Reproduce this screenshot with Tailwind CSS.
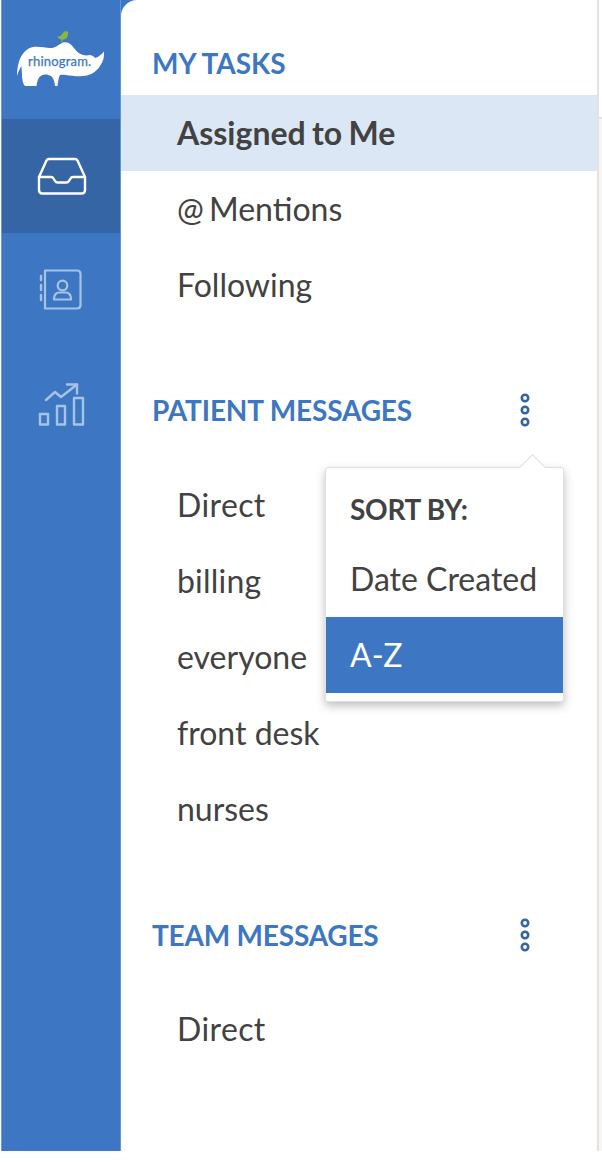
<!DOCTYPE html>
<html>
<head>
<script src="https://cdn.jsdelivr.net/npm/@tailwindcss/browser@4"></script>
</head>
<body class="bg-white">
<div class="relative h-[1164px] w-[602px] overflow-hidden bg-white font-['Lato','Carlito','Open_Sans',sans-serif]">
  <div class="flex h-[1151px] w-[602px] pl-[1px]">
    <nav class="flex h-full w-[120px] shrink-0 flex-col border-l border-l-[#6c9bd8] border-r border-r-[#5f97da] bg-[#3d77c3]">
      <div class="h-[119px] shrink-0">
        <svg class="ml-[-2px] block" width="120" height="119" viewBox="0 0 120 119">
          <path d="M62 42.500 62 39" stroke="#8bb640" stroke-width="1.200" fill="none"/>
          <path d="M57 36.500c1.500-.2 2.500.3 3.500-.5 1.200-1 2.200-3.500 4-4.500 1.300-.6 2.800-.3 3.500.5.300 2-.2 4.500-1.500 6-1.300 1.400-3.500 2-5.500 1.500-1.500-.4-2.800-1.500-4-3z" fill="#8bb640"/>
          <path d="M17 73C17.500 67 19 59 22 55c2.500-4 6-7 11-8 5-1 12 .5 17 1 5 .3 8-3 13-5.500 3-1 6 0 9 3 3 4 6 8 11 9.500 2 .6 5 .6 7 0 2.500.6 3.500 1 5 3 3-.6 6-3 9-6.500.4 5-.6 10-4 14.500-3 4.500-7 8-13 9.500-7 1.500-15 .5-21-.500-3-.5-4.500-.5-6 0-1.500 2.500-2 7-2.500 11H55c-.3-4-1.500-8-4-10-3-2-7-2.200-10-.300-3 2-4 6-4.500 10.300H25c-2-2-3-6-3-11-.2-3-.3-6-.6-9-2 3-3.500 7-4.400 10z" fill="#fff"/>
          <text x="28" y="66" fill="#3d77c3" font-size="13" font-weight="400" stroke="#3d77c3" stroke-width=".25" font-family="Lato, sans-serif" letter-spacing=".2">rhinogram.</text>
        </svg>
      </div>
      <a class="flex h-[114px] shrink-0 items-center justify-center bg-[#3565a5]">
        <svg class="ml-[1px]" width="50" height="40" viewBox="0 0 50 40" fill="none" stroke="#fff" stroke-width="2.400" stroke-linecap="round" stroke-linejoin="round">
          <path d="M2 21 9.500 4.500C10 3.400 11 3 12 3h26c1 0 2 .4 2.500 1.500L48 21"/>
          <path d="M2 21h12c1.300 0 2 .6 2.500 1.500l1.500 2.500c.7 1 1.500 1.500 2.500 1.500h9c1 0 1.800-.5 2.500-1.500l1.500-2.500c.5-.9 1.200-1.500 2.500-1.500h12v13c0 2-1.500 3.500-3.500 3.500h-39C3.500 37.500 2 36 2 34z"/>
        </svg>
      </a>
      <a class="flex h-[114px] shrink-0 items-center justify-center">
        <svg width="44" height="42" viewBox="0 0 44 42" fill="none" stroke="#a6c3e6" stroke-width="2.200" stroke-linecap="round" stroke-linejoin="round">
          <path d="M6 1.500h32c2 0 3.500 1.500 3.500 3.500v31c0 2-1.500 3.500-3.500 3.500H6z"/>
          <path d="M2 7v4M2 16v5M2 26v5" stroke-width="2.400"/>
          <circle cx="23.500" cy="16.500" r="4.800"/>
          <path d="M15 30.500v-1.500c0-3 2.500-5.500 5-5.500h7c2.500 0 5 2.500 5 5.500v1.500z"/>
        </svg>
      </a>
      <a class="flex h-[104px] shrink-0 items-start justify-center pt-[36px]">
        <svg width="48" height="44" viewBox="0 0 48 44" fill="none" stroke="#a6c3e6" stroke-width="2.400" stroke-linecap="round" stroke-linejoin="round">
          <path d="M9 17 18 9l6 5 16-12.500"/>
          <path d="M30 1.500h10v9"/>
          <rect x="3" y="31" width="8" height="10.500"/>
          <rect x="20" y="23" width="8" height="18.500"/>
          <rect x="37" y="15" width="9" height="26.500"/>
        </svg>
      </a>
    </nav>
    <div class="h-full w-[478px] shrink-0 bg-[#3d77c3]">
    <main class="relative z-10 flex h-full w-[478px] flex-col rounded-tl-[16px] border-r-2 border-r-[#e3e3e3] bg-white text-[32px] text-[#424242]">
      <h2 class="ml-[31px] mt-[46px] h-[34px] text-[28px] font-bold uppercase leading-[34px] tracking-[0px] text-[#3d77c3]">My Tasks</h2>
      <a class="mt-[15px] block h-[76px] bg-[#dce7f5] pl-[56px] font-bold leading-[76px] [word-spacing:-1.500px]">Assigned to Me</a>
      <a class="block h-[76px] pl-[56px] leading-[76px] [word-spacing:-3px]">@ Mentions</a>
      <a class="block h-[76px] pl-[56px] leading-[76px]">Following</a>

      <div class="relative mt-[70px] flex h-[34px] items-center justify-between pl-[31px] pr-[66px]">
        <h2 class="text-[28px] font-bold uppercase leading-[34px] tracking-[-0.15px] text-[#3d77c3]">Patient Messages</h2>
        <svg width="12" height="34" viewBox="0 0 12 34" fill="none" stroke="#35659f" stroke-width="2.600"><circle cx="6" cy="5" r="3.200"/><circle cx="6" cy="17" r="3.200"/><circle cx="6" cy="29" r="3.200"/></svg>
      </div>
      <a class="mt-[40px] block h-[76px] pl-[56px] leading-[76px] tracking-[0.4px]">Direct</a>
      <a class="block h-[76px] pl-[56px] leading-[76px] tracking-[0.2px]">billing</a>
      <a class="block h-[76px] pl-[56px] leading-[76px]">everyone</a>
      <a class="block h-[76px] pl-[56px] leading-[76px]">front desk</a>
      <a class="block h-[76px] pl-[56px] leading-[76px]">nurses</a>

      <div class="relative mt-[71px] flex h-[34px] items-center justify-between pl-[31px] pr-[66px]">
        <h2 class="text-[28px] font-bold uppercase leading-[34px] tracking-[-0.2px] text-[#3d77c3]">Team Messages</h2>
        <svg width="12" height="34" viewBox="0 0 12 34" fill="none" stroke="#35659f" stroke-width="2.600"><circle cx="6" cy="5" r="3.200"/><circle cx="6" cy="17" r="3.200"/><circle cx="6" cy="29" r="3.200"/></svg>
      </div>
      <a class="mt-[39px] block h-[76px] pl-[56px] leading-[76px] tracking-[0.4px]">Direct</a>
    </main>
    </div>
    <div class="mt-[117px] h-[1034px] w-[3px] shrink-0 border-t-2 border-t-[#e3e3e3] bg-[#f7f6f4]"></div>
  </div>

  <div class="absolute left-[325px] top-[467px] z-20 h-[235px] w-[239px] rounded-[3px] border border-[#e0e0e0] bg-white shadow-[0_4px_10px_rgba(0,0,0,0.25)]">
    <div class="absolute right-[21px] top-[-10px] h-[19px] w-[19px] rotate-45 border-l border-t border-[#e0e0e0] bg-white"></div>
    <div class="relative h-[78px] pl-[24px] pt-[24px] text-[28px] font-bold uppercase leading-[34px] tracking-[-0.3px] text-[#424242]">Sort By:</div>
    <div class="h-[71px] pl-[24px] text-[32px] leading-[66px] text-[#424242]">Date Created</div>
    <div class="h-[76px] bg-[#3d77c3] pl-[24px] text-[32px] leading-[76px] text-white">A-Z</div>
  </div>
</div>
</body>
</html>
